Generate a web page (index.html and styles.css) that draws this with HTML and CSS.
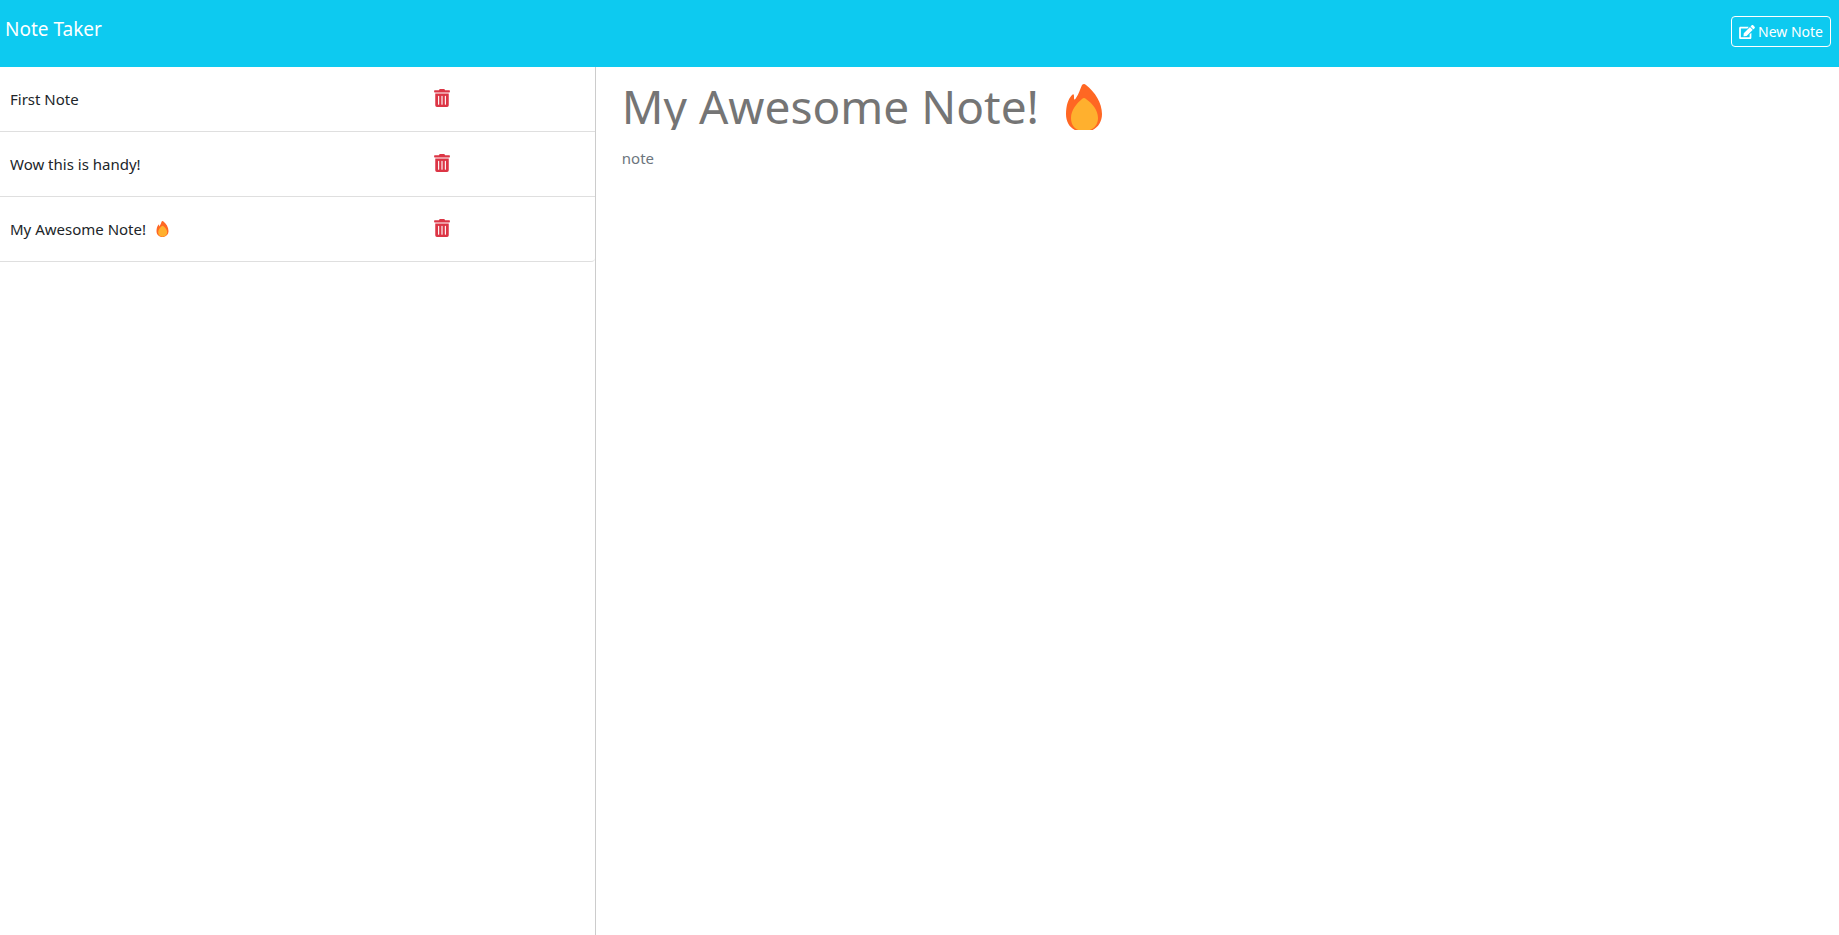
FILE: index.html
```
<!DOCTYPE html>
<html lang="en">
<head>
<meta charset="UTF-8">
<meta name="viewport" content="width=device-width, initial-scale=1">
<title>Note Taker</title>
<link rel="stylesheet" href="styles.css">
</head>
<body>
<svg class="sprite" aria-hidden="true">
  <symbol id="trash" viewBox="0 0 448 512"><path d="M32 464a48 48 0 0 0 48 48h288a48 48 0 0 0 48-48V128H32zm272-256a16 16 0 0 1 32 0v224a16 16 0 0 1-32 0zm-96 0a16 16 0 0 1 32 0v224a16 16 0 0 1-32 0zm-96 0a16 16 0 0 1 32 0v224a16 16 0 0 1-32 0zM432 32H312l-9.4-18.7A24 24 0 0 0 281.1 0H166.8a23.72 23.72 0 0 0-21.4 13.3L136 32H16A16 16 0 0 0 0 48v32a16 16 0 0 0 16 16h416a16 16 0 0 0 16-16V48a16 16 0 0 0-16-16z"/></symbol>
  <symbol id="edit" viewBox="0 0 576 512"><path d="M402.6 83.2l90.2 90.2c3.8 3.8 3.8 10 0 13.8L274.4 405.6l-92.8 10.3c-12.4 1.4-22.9-9.1-21.5-21.5l10.3-92.8L388.8 83.2c3.8-3.8 10-3.8 13.8 0zm162-22.9l-48.8-48.8c-15.2-15.2-39.9-15.2-55.2 0l-35.4 35.4c-3.8 3.8-3.8 10 0 13.8l90.2 90.2c3.8 3.8 10 3.8 13.8 0l35.4-35.4c15.2-15.3 15.2-40 0-55.2zM384 346.2V448H64V128h229.8c3.2 0 6.2-1.3 8.5-3.5l40-40c7.6-7.6 2.2-20.5-8.5-20.5H48C21.5 64 0 85.5 0 112v352c0 26.5 21.5 48 48 48h352c26.5 0 48-21.5 48-48V306.2c0-10.7-12.9-16-20.5-8.5l-40 40c-2.2 2.3-3.5 5.3-3.5 8.5z"/></symbol>
  <symbol id="fire" viewBox="0 0 38 48"><path fill="#ff6723" d="M17 1Q19-1 21 1C30 8 37 19 37 30C37 41 29 48 19 48C8 48 1 41 1 30C1 22 3 15 7 11Q9 9 9 12V14Q9 17 11 14C14 10 15 5 17 1Z"/><path fill="#ffb02e" d="M17 15Q19 13 21 15C27 19 33 26 33 34C33 42 27 47 19 47C11 47 6 42 6 34C6 26 12 19 17 15Z"/></symbol>
</svg>
<header class="navbar">
  <a class="brand" href="#">Note Taker</a>
  <button class="new-note" type="button"><svg class="edit-icon" aria-hidden="true"><use href="#edit"/></svg>New Note</button>
</header>
<main class="layout">
  <aside class="sidebar">
    <ul class="note-list">
      <li class="note"><button class="note-title" type="button">First Note</button><button class="delete" type="button" aria-label="Delete First Note"><svg class="trash-icon"><use href="#trash"/></svg></button></li>
      <li class="note"><button class="note-title" type="button">Wow this is handy!</button><button class="delete" type="button" aria-label="Delete Wow this is handy!"><svg class="trash-icon"><use href="#trash"/></svg></button></li>
      <li class="note"><button class="note-title" type="button">My Awesome Note!<svg class="fire-small" aria-hidden="true"><use href="#fire"/></svg></button><button class="delete" type="button" aria-label="Delete My Awesome Note!"><svg class="trash-icon"><use href="#trash"/></svg></button></li>
    </ul>
  </aside>
  <section class="editor">
    <div class="title-field">
      <input class="title-input" type="text" aria-label="Note title" placeholder="My Awesome Note!">
      <svg class="fire-large" aria-hidden="true"><use href="#fire"/></svg>
    </div>
    <textarea class="text-input" aria-label="Note text" placeholder="note"></textarea>
  </section>
</main>
</body>
</html>
```
FILE: styles.css
```
* { box-sizing: border-box; }
body {
  margin: 0;
  min-height: 100vh;
  display: flex;
  flex-direction: column;
  background: #fff;
  color: #212529;
  font: 15px/24px "Segoe UI", "Noto Sans", "Open Sans", sans-serif;
}
button, input, textarea { font: inherit; color: inherit; margin: 0; padding: 0; border: 0; background: none; }
button { cursor: pointer; }
.sprite { display: none; }
.navbar {
  display: flex;
  align-items: flex-start;
  justify-content: space-between;
  padding: 14px 8px 20px 5px;
  background: #0dcaf0;
}
.brand { color: #fff; font-size: 19px; line-height: 30px; text-decoration: none; }
.new-note {
  display: flex;
  align-items: center;
  gap: 3px;
  margin-top: 2px;
  padding: 4px 7px;
  border: 1px solid #fff;
  border-radius: 4px;
  color: #fff;
  font-size: 14px;
  line-height: 21px;
}
.edit-icon { width: 16px; height: 14px; fill: currentColor; }
.layout { flex: 1; display: grid; grid-template-columns: 32.4% 1fr; }
.sidebar { border-right: 1px solid #ccc; }
.note-list {
  list-style: none;
  margin: 0;
  padding: 0;
}
.note {
  display: grid;
  grid-template-columns: 1fr 51.5%;
  align-items: center;
  padding: 20px 0;
  border-bottom: 1px solid #dfdfdf;
}
.note:last-child { border-bottom-right-radius: 4px; }
.note-title { display: flex; align-items: center; padding-left: 10px; text-align: left; white-space: nowrap; }
.delete { display: flex; justify-content: center; color: #dc3545; }
.trash-icon { width: 16px; height: 18px; margin-bottom: 2px; fill: currentColor; }
.fire-small { width: 13px; height: 16px; margin-left: 10px; }
.editor { display: flex; flex-direction: column; padding: 15px 24px 24px 26px; }
.title-field { display: flex; height: 48px; margin-bottom: 16px; overflow: hidden; }
.title-input { field-sizing: content; height: 48px; font-size: 46px; line-height: 48px; }
.title-input::placeholder { color: #757575; opacity: 1; }
.fire-large { flex: none; width: 38px; height: 48px; margin: 2px 0 0 26px; }
.text-input { flex: 1; resize: none; }
.text-input::placeholder { color: #6c757d; opacity: 1; }
input:focus, textarea:focus { outline: none; }
```
